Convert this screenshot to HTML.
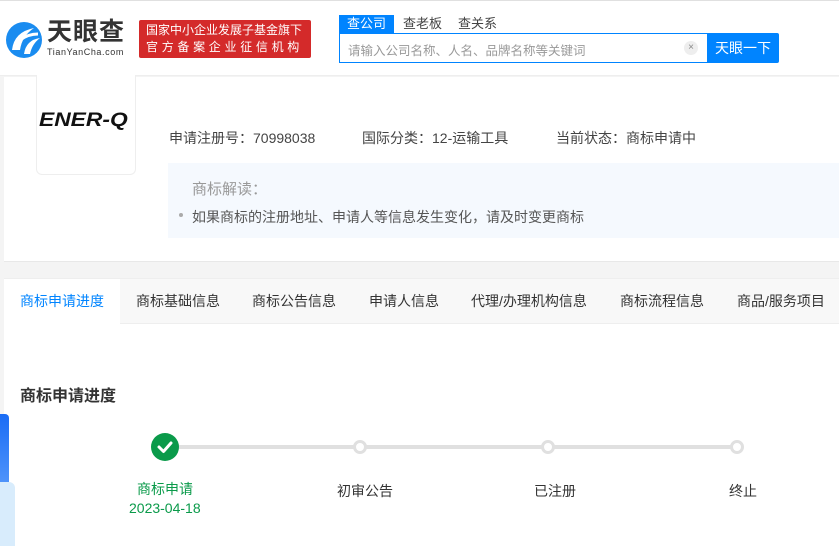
<!DOCTYPE html>
<html><head><meta charset="utf-8"><style>
*{margin:0;padding:0;box-sizing:border-box}
body{width:839px;height:546px;overflow:hidden;background:#f4f4f4;font-family:"Liberation Sans","Noto Sans CJK SC",sans-serif;position:relative;color:#333}
.abs{position:absolute;white-space:nowrap}
</style></head><body>
<div class="abs" style="left:0;top:0;width:839px;height:1px;background:#e0e0e0"></div>
<div class="abs" style="left:0;top:1px;width:839px;height:75px;background:#fff;border-bottom:1px solid #eee"></div>
<!-- logo -->
<svg class="abs" style="left:4px;top:20px" width="40" height="40" viewBox="0 0 40 40">
<circle cx="20" cy="20" r="18" fill="#1a8cf0"/>
<path d="M8 30 Q10 12 30 8 Q18 16 16 30Z" fill="#fff"/>
<path d="M20 34 Q22 20 36 18 Q28 24 26 34Z" fill="#fff"/>
<path d="M16 20 Q24 14 34 14" stroke="#fff" stroke-width="3" fill="none"/>
</svg>
<div class="abs" style="left:47px;top:18px;font-size:25px;line-height:28px;font-weight:bold;color:#333;letter-spacing:1px">天眼查</div>
<div class="abs" style="left:47px;top:47px;font-size:9px;line-height:10px;color:#333;letter-spacing:0.6px">TianYanCha.com</div>
<div class="abs" style="left:139px;top:20px;width:172px;height:38px;background:#d42a2a;border-radius:2px;color:#fff;font-size:12px;line-height:17px;padding:2px 0 0 7px;overflow:hidden">国家中小企业发展子基金旗下<br><span style="letter-spacing:3.7px">官方备案企业征信机构</span></div>
<!-- search -->
<div class="abs" style="left:339px;top:15px;width:55px;height:18px;background:#0084ff;color:#fff;font-size:13px;line-height:18px;text-align:center">查公司</div>
<div class="abs" style="left:403px;top:15px;font-size:13px;line-height:18px;color:#444">查老板</div>
<div class="abs" style="left:458px;top:15px;font-size:13px;line-height:18px;color:#444">查关系</div>
<div class="abs" style="left:339px;top:33px;width:370px;height:30px;border:1px solid #0084ff;background:#fff"></div>
<div class="abs" style="left:348px;top:40px;font-size:12.5px;color:#999">请输入公司名称、人名、品牌名称等关键词</div>
<div class="abs" style="left:684px;top:41px;width:14px;height:14px;border-radius:7px;background:#eee;color:#888;font-size:10px;line-height:14px;text-align:center">×</div>
<div class="abs" style="left:707px;top:33px;width:72px;height:30px;background:#0084ff;color:#fff;font-size:14px;line-height:30px;text-align:center;border-radius:0 2px 2px 0">天眼一下</div>
<!-- card 1 -->
<div class="abs" style="left:4px;top:77px;width:835px;height:185px;background:#fff;border-bottom:1px solid #e8e8e8"></div>
<div class="abs" style="left:36px;top:75px;width:100px;height:100px;border:1px solid #eee;border-top:none;border-radius:0 0 6px 6px;background:#fff"></div>
<div class="abs" style="left:39px;top:110px;font-size:19px;line-height:22px;font-weight:bold;font-style:italic;color:#111;transform:scaleX(1.2);transform-origin:left">ENER-Q</div>
<div class="abs" style="left:169px;top:128px;font-size:14px;color:#444">申请注册号：70998038</div>
<div class="abs" style="left:362px;top:128px;font-size:14px;color:#444">国际分类：12-运输工具</div>
<div class="abs" style="left:556px;top:128px;font-size:14px;color:#444">当前状态：商标申请中</div>
<div class="abs" style="left:168px;top:163px;width:671px;height:75px;background:#f5f9fe"></div>
<div class="abs" style="left:192px;top:178px;font-size:15px;color:#999">商标解读：</div>
<div class="abs" style="left:179px;top:213px;width:4px;height:4px;border-radius:2px;background:#aaa"></div>
<div class="abs" style="left:192px;top:207px;font-size:14px;color:#555">如果商标的注册地址、申请人等信息发生变化，请及时变更商标</div>
<!-- tabs -->
<div class="abs" style="left:4px;top:278px;width:835px;height:268px;background:#fff"></div>
<div class="abs" style="left:4px;top:278px;width:835px;height:46px;background:#f8f8f8;border-top:1px solid #eee;border-bottom:1px solid #eee"></div>
<div class="abs" style="left:4px;top:279px;width:116px;height:45px;background:#fff"></div>
<div class="abs" style="left:20px;top:291px;font-size:14px;color:#0084ff">商标申请进度</div>
<div class="abs" style="left:136px;top:291px;font-size:14px;color:#333">商标基础信息</div>
<div class="abs" style="left:252px;top:291px;font-size:14px;color:#333">商标公告信息</div>
<div class="abs" style="left:369px;top:291px;font-size:14px;color:#333">申请人信息</div>
<div class="abs" style="left:471px;top:291px;font-size:14px;color:#333">代理/办理机构信息</div>
<div class="abs" style="left:620px;top:291px;font-size:14px;color:#333">商标流程信息</div>
<div class="abs" style="left:737px;top:291px;font-size:14px;color:#333">商品/服务项目</div>
<div class="abs" style="left:20px;top:382px;font-size:16px;font-weight:bold;color:#333">商标申请进度</div>
<!-- progress -->
<div class="abs" style="left:165px;top:445px;width:572px;height:4px;background:#e0e0e0"></div>
<div class="abs" style="left:151px;top:433px;width:28px;height:28px;border-radius:14px;background:#0a9a4a"></div>
<svg class="abs" style="left:151px;top:433px" width="28" height="28"><path d="M8 14 L12.5 18.5 L20 10" stroke="#fff" stroke-width="3" fill="none" stroke-linecap="round" stroke-linejoin="round"/></svg>
<div class="abs" style="left:353px;top:440px;width:14px;height:14px;border-radius:7px;border:3px solid #e0e0e0;background:#fff"></div>
<div class="abs" style="left:541px;top:440px;width:14px;height:14px;border-radius:7px;border:3px solid #e0e0e0;background:#fff"></div>
<div class="abs" style="left:730px;top:440px;width:14px;height:14px;border-radius:7px;border:3px solid #e0e0e0;background:#fff"></div>
<div class="abs" style="left:137px;top:479px;font-size:14px;color:#0a9a4a">商标申请</div>
<div class="abs" style="left:129px;top:500px;font-size:14px;color:#0a9a4a">2023-04-18</div>
<div class="abs" style="left:337px;top:481px;font-size:14px;color:#333">初审公告</div>
<div class="abs" style="left:534px;top:481px;font-size:14px;color:#333">已注册</div>
<div class="abs" style="left:729px;top:481px;font-size:14px;color:#333">终止</div>
<!-- left float -->
<div class="abs" style="left:0;top:414px;width:9px;height:132px;background:linear-gradient(#1a6cf5,#7fb8ff);border-radius:0 4px 0 0"></div>
<div class="abs" style="left:0;top:482px;width:15px;height:64px;background:#d8ecfc;border-radius:0 6px 0 0"></div>
</body></html>
